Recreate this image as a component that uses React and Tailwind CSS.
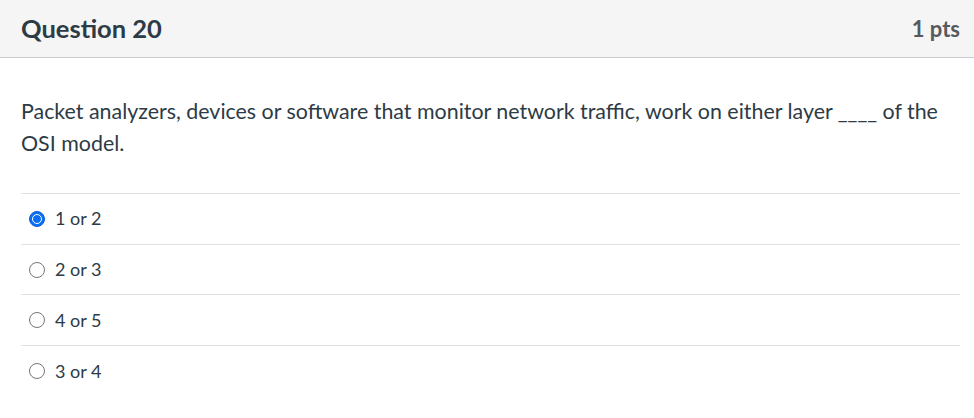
import React from 'react';

const answers = [
    { id: 1, text: '1 or 2', selected: true },
    { id: 2, text: '2 or 3', selected: false },
    { id: 3, text: '4 or 5', selected: false },
    { id: 4, text: '3 or 4', selected: false },
];

function Radio({ checked }) {
    if (checked) {
        return (
            <span className="w-[16px] h-[16px] rounded-full bg-[#0b6ff5] border border-[#0a5fd4] flex items-center justify-center shrink-0">
                <span className="w-[10px] h-[10px] rounded-full bg-[#0b6ff5] border-[1.5px] border-white" />
            </span>
        );
    }
    return <span className="w-[16px] h-[16px] rounded-full border border-[#767676] bg-white shrink-0" />;
}

export default function App() {
    return (
        <div className="w-[974px] h-[418px] bg-white text-[#2d3b45]" style={{ fontFamily: 'Lato, "Open Sans", sans-serif' }}>
            <div className="h-[58px] bg-[#f5f5f5] border-b border-[#c7cdd1] flex items-center justify-between pl-[21px] pr-[14px]">
                <h2 className="text-[25.5px] font-bold text-[#2d3b45]">Question 20</h2>
                <span className="text-[22px] font-bold text-[#555a5e]">1 pts</span>
            </div>

            <div className="px-[21px] pr-[14px]">
                <p className="pt-[37px] text-[21.4px] leading-[32px]">
                    Packet analyzers, devices or software that monitor network traffic, work on either layer ____ of the OSI model.
                </p>

                <div className="mt-[34px] border-t border-[#dfe1e3]">
                    {answers.map(a => (
                        <div key={a.id} className="h-[50.7px] border-b border-[#dfe1e3] flex items-center gap-[10px] pl-[8px] last:border-b-0">
                            <Radio checked={a.selected} />
                            <span className="text-[18px]">{a.text}</span>
                        </div>
                    ))}
                </div>
            </div>
        </div>
    );
}
